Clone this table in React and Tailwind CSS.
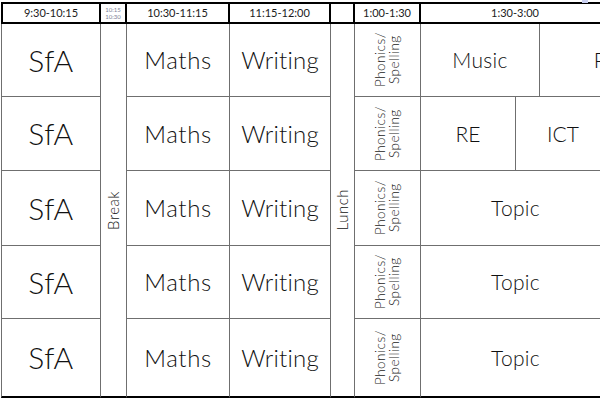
import React from "react";

const font = { fontFamily: "Lato, 'Open Sans', sans-serif" };

function H({ children, className = "" }) {
  return (
    <div className={"flex items-center justify-center border-r-2 border-b-2 border-black text-[11px] text-[#1a1a1a] " + className}>
      {children}
    </div>
  );
}

function C({ children, className = "", last }) {
  return (
    <div
      className={
        "flex items-center justify-center border-r border-[#6f6f6f] text-[#111] font-light " +
        (last ? "border-b-2 border-b-black " : "border-b ") +
        className
      }
    >
      {children}
    </div>
  );
}

function Vert({ children, className = "" }) {
  return (
    <div className={"[writing-mode:vertical-rl] rotate-180 text-center leading-[1.05] font-light " + className}>{children}</div>
  );
}

export default function App() {
  const rows = [0, 1, 2, 3, 4];
  return (
    <div className="w-[600px] h-[400px] overflow-hidden bg-white pt-[2px] pl-[1px] relative" style={font}>
      <div className="absolute right-[12px] top-0 w-[6px] h-[3px] bg-[#c9cff0]" />
      <div className="grid w-[610px] grid-cols-[100px_26px_103px_101px_24px_66px_190px] grid-rows-[20px_73px_74px_75px_73px_79px] border-t-2 border-black">
        <H className="border-l-2">9:30-10:15</H>
        <H>
          <div className="text-[6px] leading-[7px] text-[#7d8296] text-center">10:15<br />10:30</div>
        </H>
        <H>10:30-11:15</H>
        <H>11:15-12:00</H>
        <H></H>
        <H>1:00-1:30</H>
        <H>1:30-3:00</H>

        {rows.map((r) => {
          const last = r === 4;
          return (
            <React.Fragment key={r}>
              <C last={last} className="border-l text-[30px] col-start-1 tracking-[0.5px]">SfA</C>
              {r === 0 && (
                <div className="row-start-2 row-span-5 col-start-2 flex items-center justify-center border-r border-[#6f6f6f] border-b-2 border-b-black text-[#111]">
                  <Vert className="text-[15px] tracking-[0.5px]">Break</Vert>
                </div>
              )}
              <C last={last} className="col-start-3 text-[24px] tracking-[0.6px]">Maths</C>
              <C last={last} className="col-start-4 text-[24px] tracking-[0.2px]">Writing</C>
              {r === 0 && (
                <div className="row-start-2 row-span-5 col-start-5 flex items-center justify-center border-r border-[#6f6f6f] border-b-2 border-b-black text-[#111]">
                  <Vert className="text-[15px] tracking-[0.5px]">Lunch</Vert>
                </div>
              )}
              <C last={last} className="col-start-6">
                <Vert className="text-[13.5px] tracking-[0.5px] text-[#1a1a1a]">Phonics/<br />Spelling</Vert>
              </C>
              {r === 0 ? (
                <div className="col-start-7 flex border-b border-[#6f6f6f] overflow-visible text-[#111] font-light">
                  <div className="w-[119px] shrink-0 flex items-center justify-center border-r border-[#6f6f6f] text-[21px] tracking-[0.3px]">Music</div>
                  <div className="w-[132px] shrink-0 flex items-center justify-center text-[21px]">PE</div>
                </div>
              ) : r === 1 ? (
                <div className="col-start-7 flex border-b border-r border-[#6f6f6f] text-[#111] font-light">
                  <div className="w-[95px] shrink-0 flex items-center justify-center border-r border-[#6f6f6f] text-[21px]">RE</div>
                  <div className="flex-1 flex items-center justify-center text-[21px]">ICT</div>
                </div>
              ) : (
                <C last={last} className="col-start-7 text-[21px] tracking-[0.3px]">Topic</C>
              )}
            </React.Fragment>
          );
        })}
      </div>
    </div>
  );
}
